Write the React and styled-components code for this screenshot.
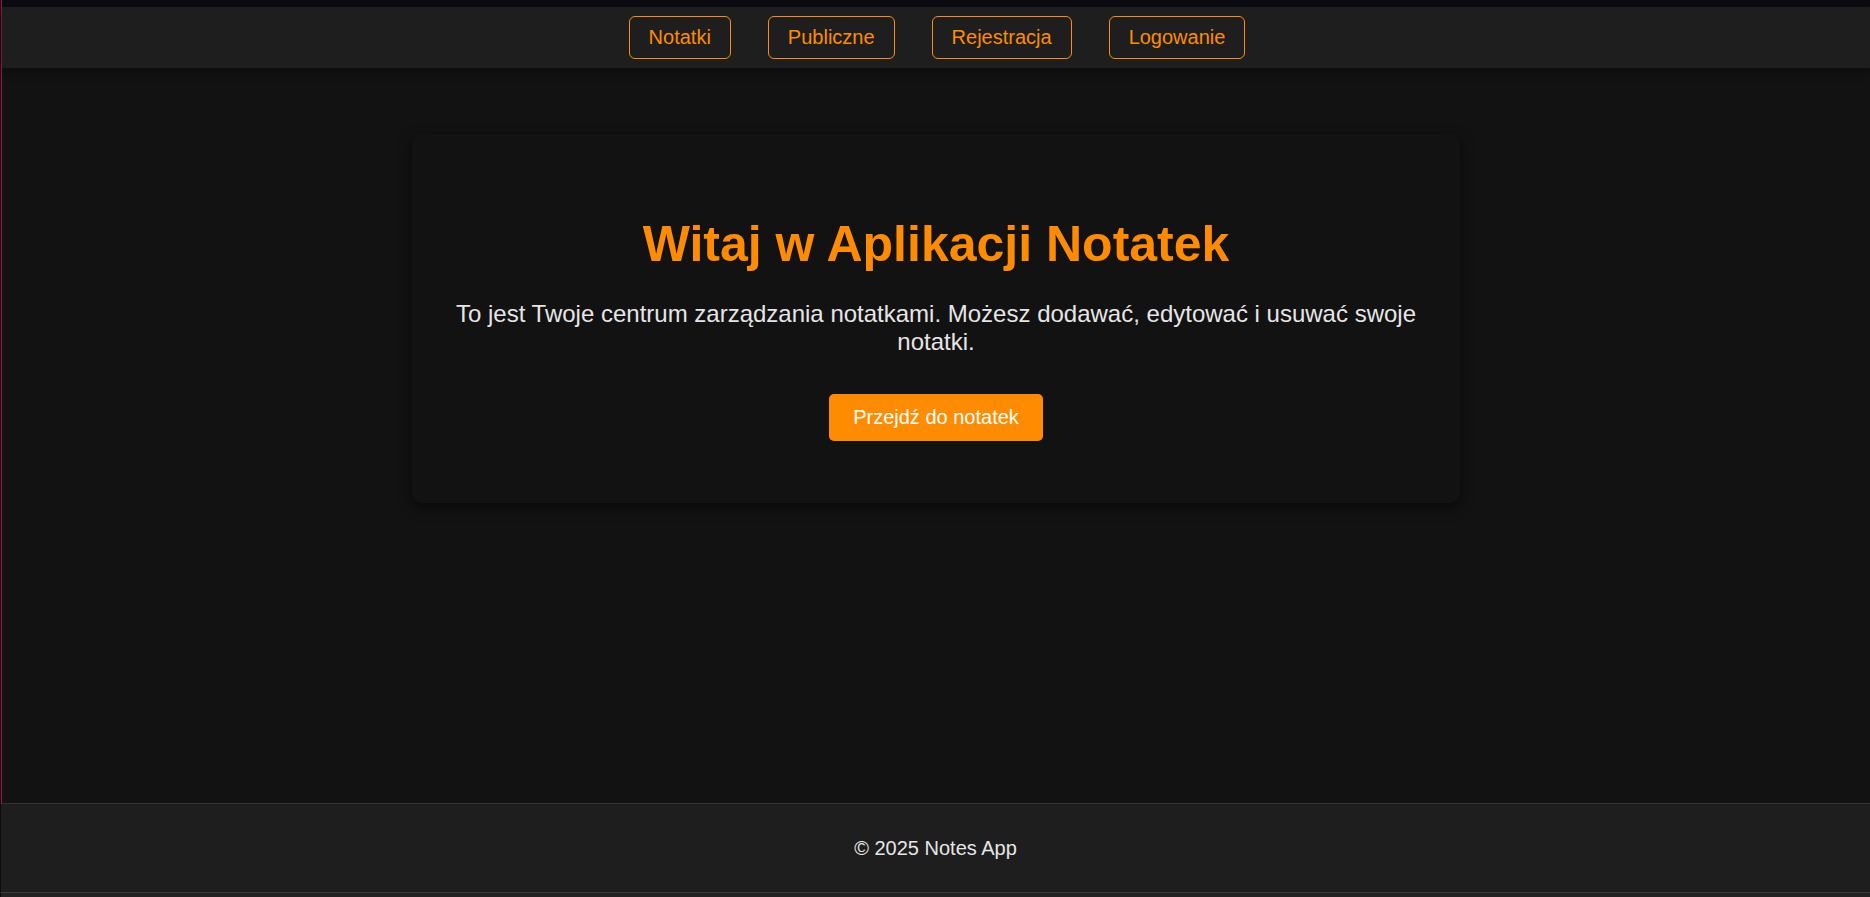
import React from "react";
import styled, { createGlobalStyle } from "styled-components";

const GlobalStyle = createGlobalStyle`
  html, body {
    margin: 0;
    padding: 0;
    background: #121212;
    font-family: "Liberation Sans", Arial, sans-serif;
  }
  * {
    box-sizing: border-box;
  }
`;

const Page = styled.div`
  min-height: 100vh;
  display: flex;
  flex-direction: column;
  border-left: 1px solid #0b0b12;
  background: #121212;
`;

const Upper = styled.div`
  flex: 1;
  display: flex;
  flex-direction: column;
  border-left: 1px solid #a3174a;
`;

const TopStrip = styled.div`
  height: 7px;
  background: #0b0b12;
`;

const Nav = styled.nav`
  height: 61px;
  background: #1e1e1e;
  display: flex;
  align-items: center;
  justify-content: center;
  gap: 37px;
  padding-left: 2px;
  box-shadow: 0 2px 10px rgba(0, 0, 0, 0.45);
  position: relative;
  z-index: 1;
`;

const NavLink = styled.a`
  display: block;
  font-size: 20px;
  line-height: 23px;
  color: #ff8c00;
  border: 1px solid #ff8c00;
  border-radius: 6px;
  padding: 9px 19px;
  text-decoration: none;
  cursor: pointer;
`;

const Main = styled.main`
  flex: 1;
  display: flex;
  flex-direction: column;
  align-items: center;
  padding-top: 66px;
`;

const Card = styled.section`
  width: 1048px;
  background: #121212;
  border-radius: 10px;
  box-shadow: 0 4px 14px rgba(0, 0, 0, 0.55);
  padding: 81px 30px 62px;
  display: flex;
  flex-direction: column;
  align-items: center;
  text-align: center;
`;

const Title = styled.h1`
  margin: 0 0 27px;
  font-size: 50px;
  font-weight: 700;
  color: #ff8c00;
`;

const Lead = styled.p`
  margin: 0 0 38px;
  font-size: 24px;
  color: #e6e6e6;
`;

const PrimaryButton = styled.button`
  font-family: inherit;
  font-size: 20px;
  line-height: 23px;
  color: #ffffff;
  background: #ff8c00;
  border: none;
  border-radius: 5px;
  padding: 12px 24px;
  cursor: pointer;
`;

const Footer = styled.footer`
  border-left: 1px solid #0b0b12;
  margin-left: -1px;
  background: #1e1e1e;
  border-top: 1px solid #333333;
  border-bottom: 1px solid #3a3a3a;
  height: 90px;
  display: flex;
  align-items: center;
  justify-content: center;
  font-size: 20px;
  color: #e6e6e6;
`;

const BottomStrip = styled.div`
  height: 4px;
  background: #232323;
`;

const links = ["Notatki", "Publiczne", "Rejestracja", "Logowanie"];

const App = () => {
  return (
    <>
      <GlobalStyle />
      <Page>
        <Upper>
          <TopStrip />
          <Nav>
            {links.map(label => (
              <NavLink key={label}>{label}</NavLink>
            ))}
          </Nav>
          <Main>
            <Card>
              <Title>Witaj w Aplikacji Notatek</Title>
              <Lead>
                To jest Twoje centrum zarządzania notatkami. Możesz dodawać,
                edytować i usuwać swoje notatki.
              </Lead>
              <PrimaryButton>Przejdź do notatek</PrimaryButton>
            </Card>
          </Main>
        </Upper>
        <Footer>© 2025 Notes App</Footer>
        <BottomStrip />
      </Page>
    </>
  );
};

export default App;
